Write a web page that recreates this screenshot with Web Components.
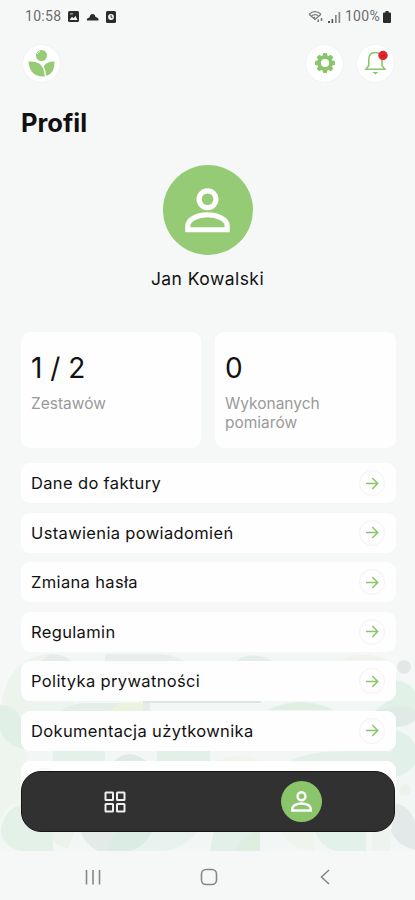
<!DOCTYPE html>
<html lang="pl">
<head>
<meta charset="UTF-8">
<meta name="viewport" content="width=device-width, initial-scale=1">
<title>Profil</title>
<style>
  body {
    margin: 0;
    background: #f6f8f8;
    font-family: Inter, "Noto Sans", sans-serif;
    color: #111;
  }
</style>
</head>
<body>
<profile-screen>
  <status-bar slot="status" time="10:58" battery="100%"></status-bar>
  <top-bar slot="header"></top-bar>
  <user-badge slot="user">Jan Kowalski</user-badge>
  <stat-card slot="stats" value="1 / 2">Zestawów</stat-card>
  <stat-card slot="stats" value="0">Wykonanych pomiarów</stat-card>
  <menu-row>Dane do faktury</menu-row>
  <menu-row>Ustawienia powiadomień</menu-row>
  <menu-row>Zmiana hasła</menu-row>
  <menu-row>Regulamin</menu-row>
  <menu-row>Polityka prywatności</menu-row>
  <menu-row>Dokumentacja użytkownika</menu-row>
  <menu-row></menu-row>
  <tab-bar slot="tabs"></tab-bar>
  <system-nav slot="system"></system-nav>
</profile-screen>

<script>
/**
 * Shared helpers
 */
const PERSON_ICON = `
  <svg viewBox="0 0 48 48" fill="none" stroke="currentColor" stroke-width="5.500">
    <circle cx="24" cy="12" r="9"/>
    <path d="M3 44.500V40.500C3 33 14 28.500 24 28.500S45 33 45 40.500V44.500Z"/>
  </svg>
`;

class BaseElement extends HTMLElement {
  constructor() {
    super();
    this.attachShadow({ mode: 'open' });
  }

  connectedCallback() {
    this.shadowRoot.innerHTML = this.template();
  }
}

/**
 * Web Component: <status-bar>
 */
class StatusBar extends BaseElement {
  template() {
    return `
      <style>
        :host {
          display: flex;
          justify-content: space-between;
          align-items: center;
          height: 33px;
          padding: 0 24px 0 25px;
          box-sizing: border-box;
          font: 14px/33px Roboto, sans-serif;
          letter-spacing: 0.3px;
          color: #6c6c6c;
        }
        div { display: flex; align-items: center; }
        .left { gap: 7px; }
        .right { gap: 4px; }
        .battery { display: flex; align-items: center; gap: 3px; }
        svg { display: block; }
      </style>
      <div class="left">
        <span>${this.getAttribute('time')}</span>
        <svg width="11" height="11" viewBox="0 0 11 11">
          <rect width="11" height="11" rx="1.500" fill="#2b2b2b"/>
          <path d="M1.500 9L4 5.800 5.500 7.200 7.500 5 9.500 9Z" fill="#f6f8f8"/>
          <path d="M2 2.200H5V3.500H2Z" fill="#aaa"/>
        </svg>
        <svg width="13" height="8" viewBox="0 0 13 8">
          <path d="M1 7.500Q0 5.500 3.500 4.500Q4 1 6.500 1T9.500 4Q13 4.500 12.500 7.500Z" fill="#2b2b2b"/>
        </svg>
        <svg width="10" height="12" viewBox="0 0 10 12">
          <rect width="10" height="12" rx="1.500" fill="#2b2b2b"/>
          <circle cx="5" cy="6" r="2.900" fill="#f6f8f8"/>
          <path d="M5 4V6.300H6.500" stroke="#2b2b2b" fill="none"/>
        </svg>
      </div>
      <div class="right">
        <svg width="16" height="13" viewBox="0 0 16 13" fill="none" stroke="#777" stroke-width="1.200">
          <path d="M1 4.200Q7 -1 13 4.200M3.200 6.300Q7 3 10.800 6.300M1 4.200L7 9.500 13 4.200M5.500 8.200L7 7"/>
          <path d="M10.200 12V9.500M13.500 8V11" stroke-width="1.600"/>
        </svg>
        <svg width="13" height="12" viewBox="0 0 13 12">
          <path d="M0 10H2V12H0ZM3.500 8H5.200V12H3.500Z" fill="#555"/>
          <path d="M7 4H8.700V12H7ZM10.500 1H12.200V12H10.500Z" fill="#888"/>
        </svg>
        <span class="battery">
          <span>${this.getAttribute('battery')}</span>
          <svg width="8" height="12" viewBox="0 0 8 12">
            <path d="M2.500 0H5.500V1.500H7A1 1 0 0 1 8 2.500V11A1 1 0 0 1 7 12H1A1 1 0 0 1 0 11V2.500A1 1 0 0 1 1 1.500H2.500Z" fill="#2b2b2b"/>
          </svg>
        </span>
      </div>
    `;
  }
}

/**
 * Web Component: <round-button>
 */
class RoundButton extends BaseElement {
  template() {
    return `
      <style>
        :host {
          display: grid;
          place-items: center;
          width: 37px;
          height: 37px;
          border-radius: 50%;
          background: #fff;
          box-shadow: 0 0 2px rgba(0, 0, 0, 0.07);
        }
      </style>
      <slot></slot>
    `;
  }
}

/**
 * Web Component: <top-bar>
 */
class TopBar extends BaseElement {
  template() {
    const teeth = [0, 45, 90, 135, 180, 225, 270, 315]
      .map(a => `<path d="M7.300 3.500L8.200 0H11.800L12.700 3.500Z" transform="rotate(${a} 10 10)"/>`)
      .join('');

    return `
      <style>
        :host {
          display: flex;
          align-items: center;
          height: 60px;
          padding: 0 21px 0 23px;
          gap: 14px;
        }
        .logo { margin-right: auto; }
        svg { display: block; }
      </style>
      <round-button class="logo">
        <svg width="27" height="27" viewBox="0 0 27 27" fill="#95cb74">
          <circle cx="13.500" cy="5.500" r="5.500"/>
          <path d="M.5 11.500Q11.500 10.500 15 18Q16.500 22 16.800 26.500Q2 27.500 .5 11.500Z"/>
          <path d="M26.500 11.500Q18 11.500 15.700 16.500Q18 20.500 18 26Q27 23.500 26.500 11.500Z"/>
          <path d="M9 4L12 1" stroke="#fff" stroke-width=".8"/>
        </svg>
      </round-button>
      <round-button>
        <svg width="20" height="20" viewBox="0 0 20 20" fill="#8bc56b">
          ${teeth}
          <circle cx="10" cy="10" r="5.900" fill="none" stroke="#8bc56b" stroke-width="3.600"/>
        </svg>
      </round-button>
      <round-button>
        <svg width="24" height="26" viewBox="0 0 24 26" fill="none" stroke="#8bc56b" stroke-width="1.600">
          <path d="M2 19.200H20.800L18 15.500V9.500C18 5 15.300 2.500 11.400 2.500S4.800 5 4.800 9.500V15.500Z"/>
          <path d="M8.500 22H14.300L11.400 24.600Z" fill="#8bc56b" stroke="none"/>
          <circle cx="19" cy="5.500" r="4.700" fill="#e3242b" stroke="none"/>
          <path d="M17.300 5.800H20.800" stroke="#b81c24" stroke-width="1"/>
        </svg>
      </round-button>
    `;
  }
}

/**
 * Web Component: <user-badge>
 */
class UserBadge extends BaseElement {
  template() {
    return `
      <style>
        :host {
          display: flex;
          flex-direction: column;
          align-items: center;
          gap: 12px;
          font-size: 17.500px;
          letter-spacing: 0.45px;
          line-height: 24px;
        }
        .avatar {
          display: grid;
          place-items: center;
          width: 90px;
          height: 90px;
          border-radius: 50%;
          background: #95cb74;
          color: #fff;
        }
        svg { display: block; width: 45px; height: 45px; }
      </style>
      <div class="avatar">${PERSON_ICON}</div>
      <div><slot></slot></div>
    `;
  }
}

/**
 * Web Component: <stat-card>
 */
class StatCard extends BaseElement {
  template() {
    return `
      <style>
        :host {
          display: block;
          height: 116px;
          padding: 18px 10px 0;
          box-sizing: border-box;
          border-radius: 9px;
          background: #fefefe;
        }
        .value { font-size: 28px; line-height: 36px; }
        .label {
          margin-top: 8px;
          max-width: 120px;
          font-size: 15.500px;
          line-height: 19px;
          color: #9a9a9a;
        }
      </style>
      <div class="value">${this.getAttribute('value')}</div>
      <div class="label"><slot></slot></div>
    `;
  }
}

/**
 * Web Component: <menu-row>
 */
class MenuRow extends BaseElement {
  template() {
    return `
      <style>
        :host {
          display: flex;
          justify-content: space-between;
          align-items: center;
          height: 40px;
          flex: none;
          padding: 0 11px 0 10px;
          box-sizing: border-box;
          border-radius: 9px;
          background: #fefefe;
          font-size: 16.500px;
          letter-spacing: 0.35px;
        }
        .go {
          display: grid;
          place-items: center;
          width: 24px;
          height: 24px;
          border: 1px solid #f3f3f3;
          border-radius: 50%;
        }
      </style>
      <slot></slot>
      <span class="go">
        <svg width="14" height="13" viewBox="0 0 14 13" fill="none" stroke="#8bc56b" stroke-width="1.500">
          <path d="M1 6.500H12.500M7.300 1L12.700 6.500 7.300 12"/>
        </svg>
      </span>
    `;
  }
}

/**
 * Web Component: <leaf-pattern>
 * Pale shapes behind the bottom of the list
 */
class LeafPattern extends BaseElement {
  template() {
    return `
      <style>
        :host { display: block; height: 197px; }
        svg { display: block; }
      </style>
      <svg width="415" height="197" viewBox="0 0 415 197">
        <path d="M20 11Q34 0 52 0H370Q390 3 398 20L415 40V197H0V60Q5 25 20 11Z" fill="#f2f7f5"/>
        <path d="M1 55C3 20 25 0 50 0C62 0 68 3 73 10V60H1Z" fill="#edf4ed"/>
        <path d="M50 0Q64 0 72 8H40Z" fill="#e6ede9"/>
        <path d="M105 0H160Q178 1 186 10H105Z" fill="#e8eeec"/>
        <path d="M234 8Q250 -5 275 8Z" fill="#e5ede9"/>
        <path d="M340 6Q363 -4 387 6Z" fill="#f0f3ea"/>
        <path d="M0 51Q27 51 27 96Q4 92 0 75Z" fill="#e1f0e7"/>
        <path d="M0 75Q4 92 27 96V150H10L0 165Z" fill="#eef5ef"/>
        <path d="M60 58Q70 49 85 49H150V58Z" fill="#e5ede9"/>
        <path d="M108 58L120 49H143V58Z" fill="#ebf3de"/>
        <path d="M143 46H261V49H143Z" fill="#dbe7e3"/>
        <path d="M268 56Q300 40 334 56Z" fill="#dff0e3"/>
        <circle cx="404" cy="13" r="7" fill="#e3e8e7"/>
        <path d="M396 26Q411 29 415 38V56Q400 50 375 57L390 45Z" fill="#e2f1e8"/>
        <path d="M375 57Q400 48 415 56V66Q408 73 396 73Z" fill="#e0eae6"/>
        <path d="M396 76Q411 80 415 91V110Q407 121 396 123L390 100Z" fill="#e1f0e8"/>
        <path d="M53 95H105V110H53Z" fill="#e4f0ea"/>
        <path d="M111 110Q130 90 149 110Z" fill="#e0eae5"/>
        <path d="M157 97H210V110H157Z" fill="#e2f0e9"/>
        <path d="M210 110Q240 94 265 110Z" fill="#f1f4ec"/>
        <path d="M286 108Q310 97 345 97H392V108Z" fill="#e5f0ea"/>
        <path d="M1 176Q3 157 21 150L53 175V197H20Q2 192 1 176Z" fill="#e3f1e9"/>
        <path d="M53 174H76L68 194Q58 193 53 186Z" fill="#edf2ed"/>
        <path d="M80 176H120L107 197H98Q84 190 80 176Z" fill="#e3eae8"/>
        <path d="M107 197Q109 183 120 176H153Q145 193 130 197Z" fill="#daece3"/>
        <path d="M130 197Q145 193 153 176H198Q184 197 158 197Z" fill="#e8f2ee"/>
        <path d="M210 197L214 176H260V197Z" fill="#e2f0e9"/>
        <path d="M236 197Q240 181 260 176V197Z" fill="#deefe2"/>
        <path d="M280 176H314V197Q288 194 280 176Z" fill="#eff4ec"/>
        <path d="M314 176H366V197H335Q320 192 314 176Z" fill="#e3f1eb"/>
        <path d="M372 176H390V197H372Z" fill="#eff3ef"/>
        <circle cx="405" cy="136" r="6" fill="#eff2ea"/>
        <path d="M396 149Q410 153 415 168V196Q398 192 391 178Z" fill="#e3e9e8"/>
      </svg>
    `;
  }
}

/**
 * Web Component: <tab-bar>
 */
class TabBar extends BaseElement {
  template() {
    return `
      <style>
        :host {
          display: grid;
          grid-template-columns: 1fr 1fr;
          place-items: center;
          height: 61px;
          border-radius: 20px;
          box-sizing: border-box;
          border: 1px solid #161616;
          background: #313131;
          color: #fff;
        }
        svg { display: block; }
        .active {
          display: grid;
          place-items: center;
          width: 41px;
          height: 41px;
          border-radius: 50%;
          background: #8bc56b;
        }
        .active svg { width: 21px; height: 21px; }
      </style>
      <svg width="22" height="22" viewBox="0 0 22 22" fill="none" stroke="#efefef" stroke-width="2">
        <rect x="1.500" y="1.500" width="7.500" height="7.500" rx=".5"/>
        <rect x="13" y="1.500" width="7.500" height="7.500" rx=".5"/>
        <rect x="1.500" y="13" width="7.500" height="7.500" rx=".5"/>
        <rect x="13" y="13" width="7.500" height="7.500" rx=".5"/>
      </svg>
      <div class="active">${PERSON_ICON}</div>
    `;
  }
}

/**
 * Web Component: <system-nav>
 */
class SystemNav extends BaseElement {
  template() {
    return `
      <style>
        :host {
          display: grid;
          grid-template-columns: repeat(3, 116px);
          justify-content: center;
          place-items: center;
          height: 49px;
          padding: 3px 0 0 2px;
          box-sizing: border-box;
          background: #f6f8f8;
        }
        svg { display: block; fill: none; stroke: #868888; stroke-width: 1.600; }
      </style>
      <svg width="16" height="16" viewBox="0 0 16 16"><path d="M1.500 1V15.500M8 1V15.500M14.500 1V15.500"/></svg>
      <svg width="18" height="18" viewBox="0 0 18 18"><rect x="1.500" y="1.500" width="15" height="15" rx="4.500"/></svg>
      <svg width="10" height="16" viewBox="0 0 10 16"><path d="M9 1L1.500 8 9 15"/></svg>
    `;
  }
}

/**
 * Web Component: <profile-screen>
 */
class ProfileScreen extends BaseElement {
  template() {
    return `
      <style>
        :host {
          display: flex;
          flex-direction: column;
          position: relative;
          width: 415px;
          height: 900px;
          overflow: hidden;
          background: #f6f8f8;
        }
        h1 {
          margin: 14px 21px 26px;
          font-size: 25.500px;
          line-height: 32px;
          font-weight: 700;
        }
        .stats {
          display: grid;
          grid-template-columns: 180px 181px;
          gap: 14px;
          margin: 41px 19px 15px 21px;
        }
        .list {
          display: flex;
          flex-direction: column;
          gap: 9.600px;
          flex: 1;
          min-height: 0;
          overflow: hidden;
          padding: 0 19px 0 21px;
        }
        .stats, .list { position: relative; }
        leaf-pattern { position: absolute; left: 0; bottom: 49px; }
        .tabs { position: absolute; left: 21px; right: 20px; bottom: 68px; }
      </style>
      <leaf-pattern></leaf-pattern>
      <slot name="status"></slot>
      <slot name="header"></slot>
      <h1>Profil</h1>
      <slot name="user"></slot>
      <div class="stats"><slot name="stats"></slot></div>
      <div class="list"><slot></slot></div>
      <div class="tabs"><slot name="tabs"></slot></div>
      <slot name="system"></slot>
    `;
  }
}

customElements.define('round-button', RoundButton);
customElements.define('status-bar', StatusBar);
customElements.define('top-bar', TopBar);
customElements.define('user-badge', UserBadge);
customElements.define('stat-card', StatCard);
customElements.define('menu-row', MenuRow);
customElements.define('leaf-pattern', LeafPattern);
customElements.define('tab-bar', TabBar);
customElements.define('system-nav', SystemNav);
customElements.define('profile-screen', ProfileScreen);
</script>
</body>
</html>
